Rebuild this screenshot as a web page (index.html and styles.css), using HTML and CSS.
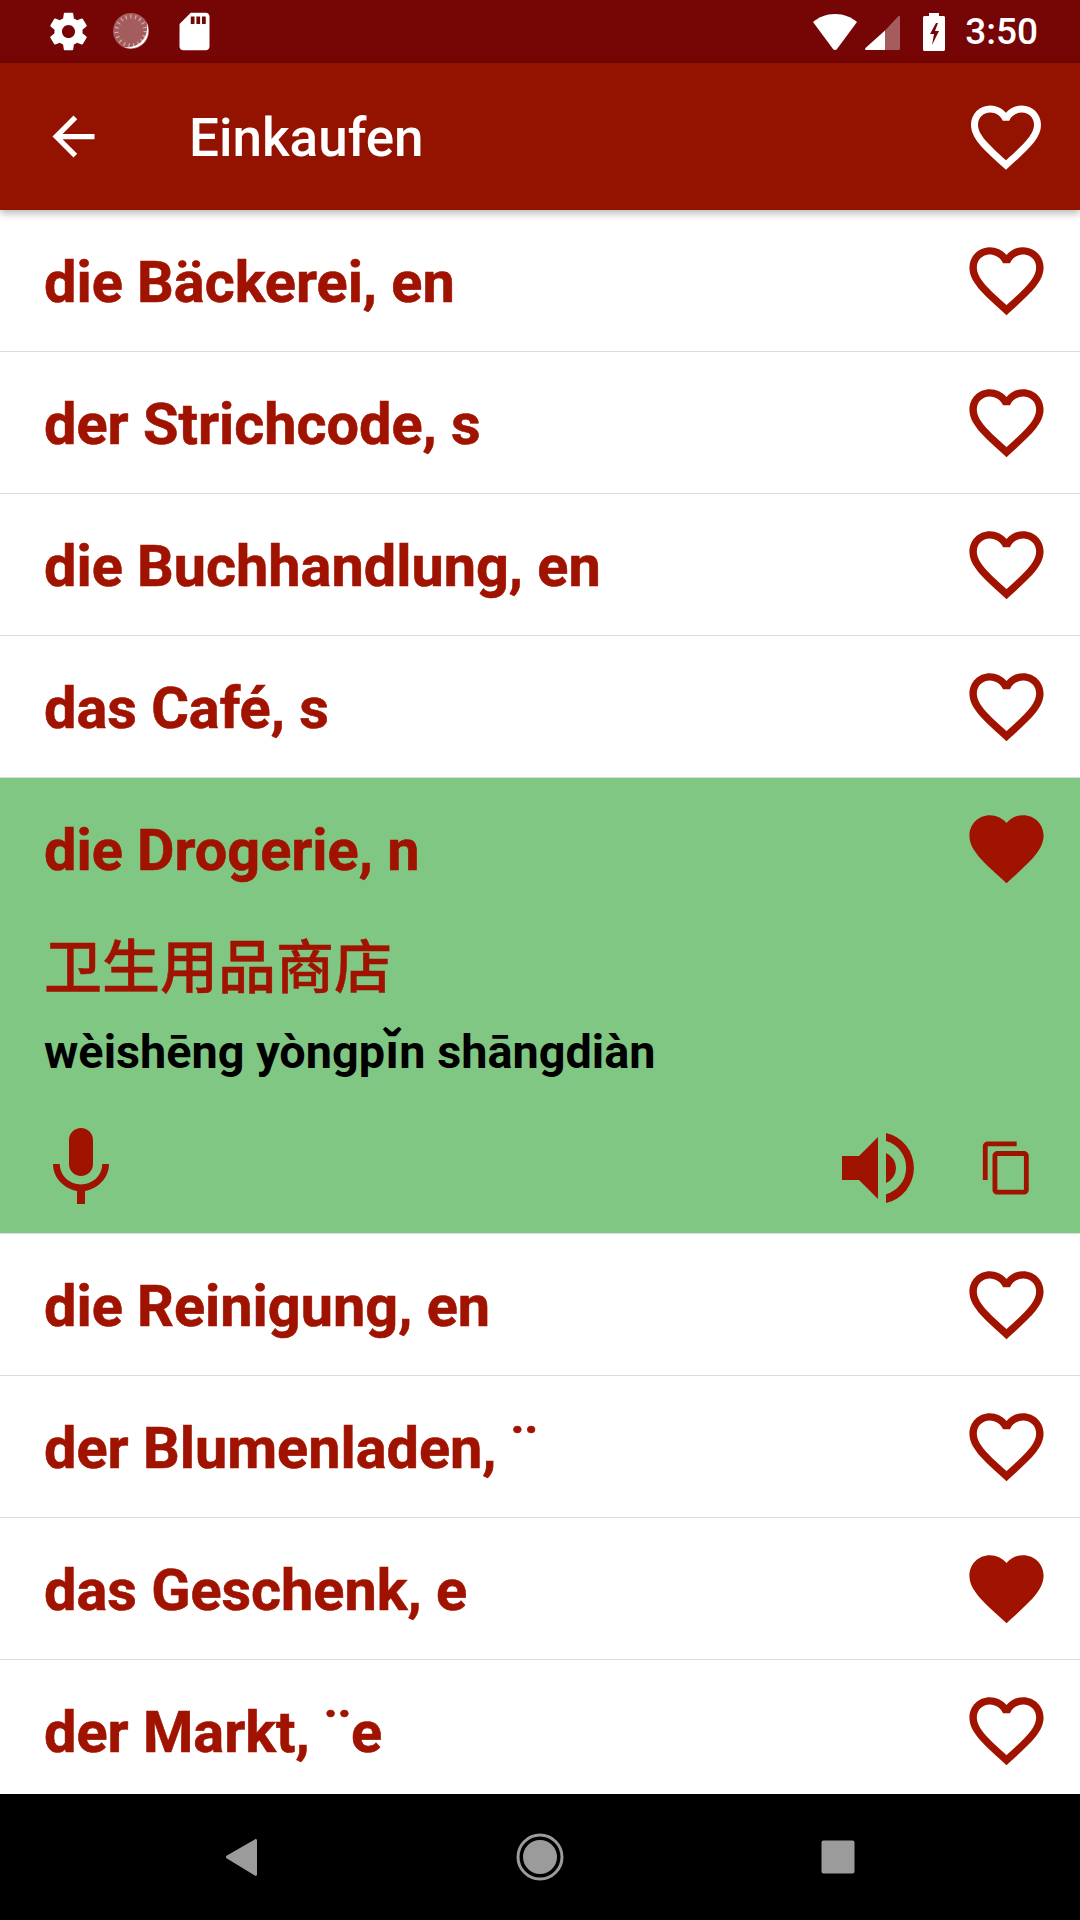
FILE: index.html
```html
<!DOCTYPE html>
<html lang="de">

<head>
    <meta charset="UTF-8">
    <link rel="stylesheet" href="styles.css">

    <title>Einkaufen</title>
</head>

<body>
    <svg class="defs" width="0" height="0">
        <symbol id="heart-line" viewBox="0 0 24 24">
            <path d="M16.5 3c-1.74 0-3.41.81-4.5 2.09C10.91 3.81 9.24 3 7.5 3 4.42 3 2 5.42 2 8.5c0 3.78 3.4 6.86 8.55 11.54L12 21.35l1.45-1.32C18.6 15.36 22 12.28 22 8.5 22 5.42 19.58 3 16.5 3zm-4.4 15.55l-.1.1-.1-.1C7.14 14.24 4 11.39 4 8.5 4 6.5 5.5 5 7.5 5c1.54 0 3.04.99 3.57 2.36h1.87C13.46 5.99 14.96 5 16.5 5c2 0 3.5 1.5 3.5 3.5 0 2.89-3.14 5.74-7.9 10.05z"/>
        </symbol>
        <symbol id="heart-full" viewBox="0 0 24 24">
            <path d="M12 21.35l-1.45-1.32C5.4 15.36 2 12.28 2 8.5 2 5.42 4.42 3 7.5 3c1.74 0 3.41.81 4.5 2.09C13.09 3.81 14.76 3 16.5 3 19.58 3 22 5.42 22 8.5c0 3.78-3.4 6.86-8.55 11.54L12 21.35z"/>
        </symbol>
    </svg>

    <div id="top">
        <div class="status-bar">
            <div class="status-left">
                <svg class="status-icon" viewBox="0 0 24 24"><path d="M19.43 12.98c.04-.32.07-.64.07-.98s-.03-.66-.07-.98l2.11-1.65c.19-.15.24-.42.12-.64l-2-3.46c-.12-.22-.39-.3-.61-.22l-2.49 1c-.52-.4-1.08-.73-1.69-.98l-.38-2.65C14.46 2.18 14.25 2 14 2h-4c-.25 0-.46.18-.49.42l-.38 2.65c-.61.25-1.17.59-1.69.98l-2.49-1c-.23-.09-.49 0-.61.22l-2 3.46c-.13.22-.07.49.12.64l2.11 1.65c-.04.32-.07.65-.07.98s.03.66.07.98l-2.11 1.65c-.19.15-.24.42-.12.64l2 3.46c.12.22.39.3.61.22l2.49-1c.52.4 1.08.73 1.69.98l.38 2.65c.03.24.24.42.49.42h4c.25 0 .46-.18.49-.42l.38-2.65c.61-.25 1.17-.59 1.69-.98l2.49 1c.23.09.49 0 .61-.22l2-3.46c.12-.22.07-.49-.12-.64l-2.11-1.65zM12 15.5c-1.93 0-3.5-1.57-3.5-3.5s1.57-3.5 3.5-3.5 3.5 1.57 3.5 3.5-1.57 3.5-3.5 3.5z"/></svg>
                <svg class="status-icon" viewBox="0 0 45 45">
                    <circle class="disc" cx="22" cy="22" r="18"/>
                    <circle class="disc-ticks" cx="22" cy="22" r="14.5"/>
                    <path d="M37.5 13c3.5 8 2 16-3 21s-13 7-20 4c7 1 14-1 18.500-6s6-11 4.500-19z"/>
                </svg>
                <svg class="status-icon" viewBox="0 0 24 24"><path d="M18 2h-8L4.020 8 4 20c0 1.100.9 2 2 2h12c1.100 0 2-.9 2-2V4c0-1.100-.9-2-2-2zm-6 6h-2V4h2v4zm3 0h-2V4h2v4zm3 0h-2V4h2v4z"/></svg>
            </div>
            <div class="status-right">
                <svg class="wifi" viewBox="0 0 44 36"><path d="M22 0C13 0 6 3 0 8l20 27c1 1.300 3 1.300 4 0L44 8C38 3 31 0 22 0z"/></svg>
                <svg class="signal" viewBox="0 0 35 35">
                    <path class="dim" d="M20 15.500L33.500 1c.7-.6 1.500-.2 1.500.7V33.500c0 .9-.6 1.500-1.500 1.500H20z"/>
                    <path d="M20 15.500V35H1.500C.2 35-.4 34 .5 33.100z"/>
                </svg>
                <svg class="battery" viewBox="0 0 22 38"><path fill-rule="evenodd" d="M6 0h10v3h4.500c.8 0 1.500.7 1.500 1.500v32c0 .8-.7 1.500-1.500 1.500H1.500C.7 38 0 37.300 0 36.500v-32C0 3.700.7 3 1.500 3H6zM13 10L7 21h4l-2 11 7-14h-4l3-8z"/></svg>
                <span class="clock">3:50</span>
            </div>
        </div>

        <div class="app-bar">
            <svg class="back" viewBox="0 0 24 24"><path d="M20 11H7.830l5.590-5.590L12 4l-8 8 8 8 1.410-1.410L7.830 13H20v-2z"/></svg>
            <h1>Einkaufen</h1>
            <svg class="bar-heart"><use href="#heart-line"/></svg>
        </div>

        <div class="list">
            <div class="row">
                <span class="word">die Bäckerei, en</span>
                <svg class="heart"><use href="#heart-line"/></svg>
            </div>
            <div class="row">
                <span class="word">der Strichcode, s</span>
                <svg class="heart"><use href="#heart-line"/></svg>
            </div>
            <div class="row">
                <span class="word">die Buchhandlung, en</span>
                <svg class="heart"><use href="#heart-line"/></svg>
            </div>
            <div class="row">
                <span class="word">das Café, s</span>
                <svg class="heart"><use href="#heart-line"/></svg>
            </div>

            <div class="open-row">
                <div class="row">
                    <span class="word">die Drogerie, n</span>
                    <svg class="heart"><use href="#heart-full"/></svg>
                </div>
                <p class="hanzi">卫生用品商店</p>
                <p class="pinyin">wèishēng yòngpǐn shāngdiàn</p>
                <div class="actions">
                    <svg class="mic" viewBox="0 0 24 24"><path d="M12 14c1.660 0 3-1.340 3-3V5c0-1.660-1.340-3-3-3S9 3.340 9 5v6c0 1.660 1.340 3 3 3zm5.300-3c0 3-2.540 5.100-5.300 5.100S6.700 14 6.700 11H5c0 3.410 2.720 6.230 6 6.720V21h2v-3.280c3.280-.48 6-3.300 6-6.720h-1.700z"/></svg>
                    <svg class="speaker" viewBox="0 0 72 70">
                        <path d="M0 23h17L36 4v62L17 47H0z"/>
                        <path d="M44 20a16.250 16.250 0 0 1 0 30z"/>
                        <path d="M44 0a35.900 35.900 0 0 1 0 70v-8.700a27.700 27.700 0 0 0 0-53.300z"/>
                    </svg>
                    <svg class="copy" viewBox="0 0 24 24"><path d="M16 1H4c-1.100 0-2 .9-2 2v14h2V3h12V1zm3 4H8c-1.100 0-2 .9-2 2v14c0 1.100.9 2 2 2h11c1.100 0 2-.9 2-2V7c0-1.100-.9-2-2-2zm0 16H8V7h11v14z"/></svg>
                </div>
            </div>

            <div class="row">
                <span class="word">die Reinigung, en</span>
                <svg class="heart"><use href="#heart-line"/></svg>
            </div>
            <div class="row">
                <span class="word">der Blumenladen, ¨</span>
                <svg class="heart"><use href="#heart-line"/></svg>
            </div>
            <div class="row">
                <span class="word">das Geschenk, e</span>
                <svg class="heart"><use href="#heart-full"/></svg>
            </div>
            <div class="row">
                <span class="word">der Markt, ¨e</span>
                <svg class="heart"><use href="#heart-line"/></svg>
            </div>
        </div>

        <div class="nav-bar">
            <svg class="nav-icon" viewBox="0 0 48 48"><path d="M39 7.500v34c0 1.300-1.200 1.900-2.200 1.100L8.500 25.200c-.8-.6-.8-1.800 0-2.400L36.800 6.400c1-.8 2.200-.2 2.200 1.100z"/></svg>
            <svg class="nav-icon" viewBox="0 0 48 48">
                <circle cx="24" cy="24" r="17"/>
                <circle class="home-ring" cx="24" cy="24" r="22"/>
            </svg>
            <svg class="nav-icon" viewBox="0 0 48 48"><rect x="7.500" y="7.500" width="33" height="33" rx="2"/></svg>
        </div>
    </div>
</body>

</html>
```

FILE: styles.css
```css
@charset "UTF-8";

/* ========BASIC======== */
html,
body {
    margin: 0;
    padding: 0;
}

body {
    font-family: Roboto, "Noto Sans CJK SC", sans-serif;
    background: #fff;
}

h1,
p {
    margin: 0;
}

svg {
    display: block;
    flex: none;
    fill: currentColor;
}

.defs {
    position: absolute;
}

#top {
    display: flex;
    flex-direction: column;
    width: 1080px;
    height: 1920px;
    overflow: hidden;
}


/* ========STATUS BAR======== */
.status-bar {
    display: flex;
    flex: none;
    justify-content: space-between;
    align-items: center;
    height: 63px;
    padding: 0 42px 0 46px;
    color: #fff;
    background: #760505;
}

.status-left,
.status-right {
    display: flex;
    align-items: center;
}

.status-left {
    gap: 18px;
}

.status-icon {
    width: 45px;
    height: 45px;
}

.disc {
    opacity: .35;
}

.disc-ticks {
    fill: none;
    stroke: #fff;
    stroke-width: 4;
    stroke-dasharray: 1.2 3.600;
    opacity: .5;
}

.wifi {
    width: 44px;
    height: 36px;
}

.signal {
    width: 35px;
    height: 35px;
    margin-left: 8px;
    margin-top: 2px;
}

.signal .dim {
    opacity: .35;
}

.battery {
    width: 22px;
    height: 38px;
    margin-left: 23px;
}

.clock {
    margin-left: 20px;
    font-size: 37px;
    font-weight: 500;
    line-height: 63px;
}


/* ========APP BAR======== */
.app-bar {
    display: flex;
    flex: none;
    position: relative;
    z-index: 1;
    align-items: center;
    height: 147px;
    padding: 0 32px 0 42px;
    color: #fff;
    background: #941300;
    box-shadow: 0 3px 8px rgba(0, 0, 0, .3);
}

.back {
    width: 63px;
    height: 63px;
}

.app-bar h1 {
    flex: 1;
    margin-left: 84px;
    padding-top: 2px;
    font-size: 53px;
    font-weight: 500;
}

.bar-heart {
    width: 84px;
    height: 84px;
}


/* ========LIST======== */
.list {
    flex: 1;
    overflow: hidden;
    color: #a01300;
}

.row {
    display: flex;
    justify-content: space-between;
    align-items: center;
    box-sizing: border-box;
    height: 142px;
    padding: 0 29px 0 44px;
    border-bottom: 1px solid #ddd;
}

.word {
    padding-top: 3px;
    font-size: 57.600px;
    font-weight: 700;
    -webkit-text-stroke: .6px currentColor;
}

.heart {
    width: 89px;
    height: 89px;
}

.open-row {
    height: 455px;
    border-bottom: 1px solid #ddd;
    background: #81c784;
}

.open-row .row {
    height: 141px;
    border-bottom: 0;
}

.hanzi {
    margin: 0 0 0 44px;
    padding-top: 14px;
    font-size: 58px;
    font-weight: 500;
    line-height: 70px;
    -webkit-text-stroke: .5px currentColor;
}

.pinyin {
    margin: 23px 0 0 44px;
    font-size: 46.800px;
    font-weight: 700;
    line-height: 52px;
    color: #000;
}

.actions {
    display: flex;
    align-items: center;
    height: 96px;
    margin-top: 42px;
    padding: 0 44px 0 33px;
}

.mic {
    width: 96px;
    height: 96px;
    margin-right: auto;
}

.speaker {
    width: 72px;
    height: 70px;
    margin-right: 64px;
}

.copy {
    width: 58px;
    height: 58px;
}


/* ========NAV BAR======== */
.nav-bar {
    display: grid;
    flex: none;
    grid-template-columns: repeat(3, 298px);
    justify-content: center;
    justify-items: center;
    align-items: center;
    height: 126px;
    color: #9b9b9b;
    background: #000;
}

.nav-icon {
    width: 48px;
    height: 48px;
}

.home-ring {
    fill: none;
    stroke: currentColor;
    stroke-width: 3;
}
```
